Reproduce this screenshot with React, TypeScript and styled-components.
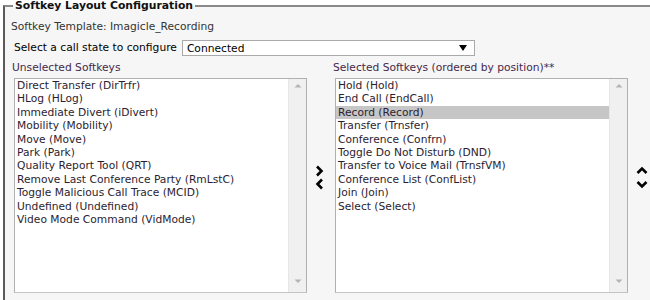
import styled, { createGlobalStyle } from "styled-components";

const unselectedKeys = [
  "Direct Transfer (DirTrfr)",
  "HLog (HLog)",
  "Immediate Divert (iDivert)",
  "Mobility (Mobility)",
  "Move (Move)",
  "Park (Park)",
  "Quality Report Tool (QRT)",
  "Remove Last Conference Party (RmLstC)",
  "Toggle Malicious Call Trace (MCID)",
  "Undefined (Undefined)",
  "Video Mode Command (VidMode)",
];

const selectedKeys = [
  "Hold (Hold)",
  "End Call (EndCall)",
  "Record (Record)",
  "Transfer (Trnsfer)",
  "Conference (Confrn)",
  "Toggle Do Not Disturb (DND)",
  "Transfer to Voice Mail (TrnsfVM)",
  "Conference List (ConfList)",
  "Join (Join)",
  "Select (Select)",
];

const GlobalStyle = createGlobalStyle`
  html, body {
    margin: 0;
    padding: 0;
    overflow: hidden;
    background: #ffffff;
  }
  body {
    font-family: "DejaVu Sans", Verdana, sans-serif;
    font-size: 10.7px;
  }
`;

function Chevron({ dir }: { dir: "left" | "right" | "up" | "down" }) {
  const paths = {
    right: "M3 1.5 L7.5 6 L3 10.5",
    left: "M8 1.5 L3.5 6 L8 10.5",
    up: "M1.5 8 L6 3.5 L10.5 8",
    down: "M1.5 4 L6 8.5 L10.5 4",
  };
  return (
    <svg width="12" height="12" viewBox="0 0 12 12">
      <path d={paths[dir]} fill="none" stroke="#000" strokeWidth="2.6" />
    </svg>
  );
}

function ListBox({ items, active }: { items: string[]; active?: string }) {
  return (
    <Box>
      <Items>
        {items.map((item) => (
          <Item key={item} $active={item === active}>
            {item}
          </Item>
        ))}
      </Items>
      <Scrollbar>
        <svg width="8" height="5" viewBox="0 0 8 5">
          <path d="M0.5 4.5 L4 1 L7.5 4.5 Z" fill="#b4b4b4" />
        </svg>
        <svg width="8" height="5" viewBox="0 0 8 5">
          <path d="M0.5 0.5 L4 4 L7.5 0.5 Z" fill="#b4b4b4" />
        </svg>
      </Scrollbar>
    </Box>
  );
}

export default function App() {
  return (
    <>
      <GlobalStyle />
      <Fieldset>
        <Legend>Softkey Layout Configuration</Legend>
        <TemplateLine>Softkey Template: Imagicle_Recording</TemplateLine>
        <StateRow>
          <StateLabel>Select a call state to configure</StateLabel>
          <StateSelect>
            <span>Connected</span>
            <svg width="8" height="6" viewBox="0 0 8 6">
              <path d="M0 0 L8 0 L4 6 Z" fill="#000" />
            </svg>
          </StateSelect>
        </StateRow>
        <Columns>
          <ColumnLabel>Unselected Softkeys</ColumnLabel>
          <span />
          <ColumnLabel>Selected Softkeys (ordered by position)**</ColumnLabel>
          <span />
          <ListBox items={unselectedKeys} />
          <ArrowStack>
            <ArrowButton>
              <Chevron dir="right" />
            </ArrowButton>
            <ArrowButton>
              <Chevron dir="left" />
            </ArrowButton>
          </ArrowStack>
          <ListBox items={selectedKeys} active="Record (Record)" />
          <ArrowStack>
            <ArrowButton>
              <Chevron dir="up" />
            </ArrowButton>
            <ArrowButton>
              <Chevron dir="down" />
            </ArrowButton>
          </ArrowStack>
        </Columns>
      </Fieldset>
    </>
  );
}

const Fieldset = styled.fieldset`
  box-sizing: border-box;
  margin: 0 0 0 3px;
  padding: 8px 0 7px 6px;
  width: calc(100vw - 3px);
  height: 300px;
  min-width: 0;
  overflow: hidden;
  background: #f6f6f6;
  border: none;
  border-top: 2px solid #8a8a8a;
  border-left: 2px solid #5a5a5a;
`;

const Legend = styled.legend`
  margin-left: 2px;
  padding: 0 2px;
  font-weight: bold;
  font-size: 10.8px;
  line-height: 12px;
  color: #111;
`;

const TemplateLine = styled.div`
  line-height: 14px;
  color: #333;
`;

const StateRow = styled.div`
  display: flex;
  align-items: center;
  gap: 5px;
  margin-top: 6px;
  padding-left: 3px;
`;

const StateLabel = styled.span`
  color: #000;
  line-height: 16px;
`;

const StateSelect = styled.div`
  width: 280px;
  height: 14px;
  padding: 0 7px 0 4px;
  display: flex;
  align-items: center;
  justify-content: space-between;
  background: #fff;
  border: 1px solid #a9a9a9;
  color: #000;
`;

const Columns = styled.div`
  display: grid;
  grid-template-columns: 296px 25px 296px 28px;
  grid-template-rows: auto 215px;
  margin-top: 5px;
`;

const ColumnLabel = styled.div`
  line-height: 14px;
  padding-left: 1px;
  margin-bottom: 3px;
  color: #45284a;
`;

const Box = styled.div`
  margin-left: 3px;
  display: flex;
  background: #fff;
  border: 1px solid #b0b0b0;
  border-bottom-color: #c4c4c4;
`;

const Items = styled.div`
  flex: 1;
`;

const Item = styled.div<{ $active?: boolean }>`
  line-height: 13.4px;
  padding-left: 2px;
  color: #2c1d30;
  white-space: nowrap;
  background: ${(p) => (p.$active ? "#c6c6c6" : "transparent")};
`;

const Scrollbar = styled.div`
  width: 17px;
  display: flex;
  flex-direction: column;
  justify-content: space-between;
  align-items: center;
  padding: 4px 0 8px;
  background: #f0f0f0;
  border-left: 1px solid #e6e6e6;
`;

const ArrowStack = styled.div`
  display: flex;
  flex-direction: column;
  align-items: center;
  padding-top: 86px;
`;

const ArrowButton = styled.div`
  height: 13px;
  display: flex;
  align-items: center;
  justify-content: center;
  cursor: pointer;
`;
